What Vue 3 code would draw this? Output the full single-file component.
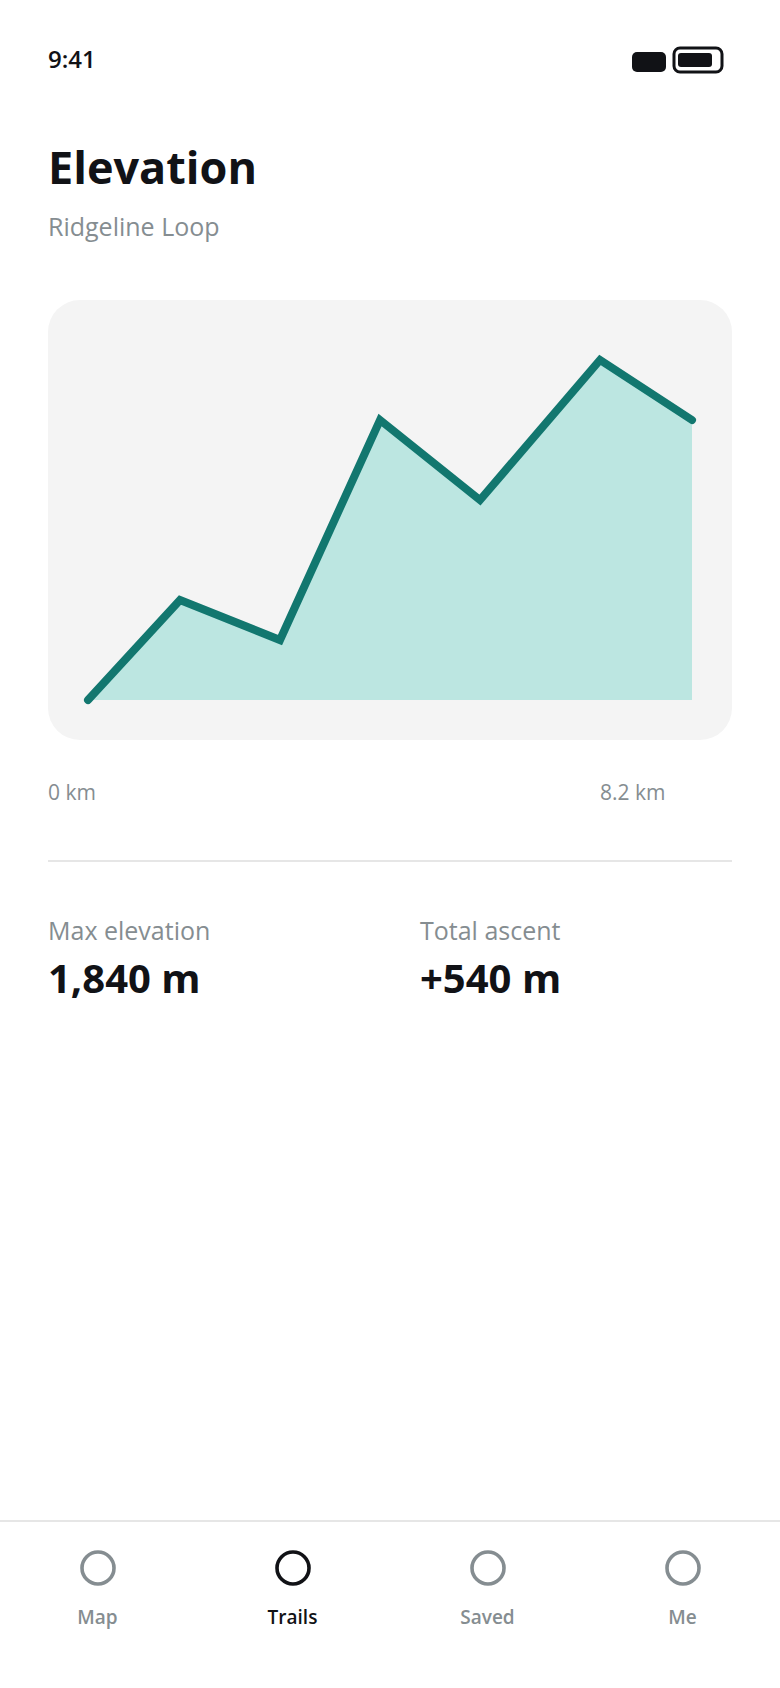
<script setup>
import { computed, ref } from 'vue'

const points = [
  [40, 400],
  [132, 300],
  [232, 340],
  [332, 120],
  [432, 200],
  [552, 60],
  [644, 120],
]
const line = computed(() => points.map((p) => p.join(',')).join(' '))
const area = computed(() => `${line.value} 644,400 40,400`)

const stats = [
  { label: 'Max elevation', value: '1,840 m' },
  { label: 'Total ascent', value: '+540 m' },
]

const tabs = ['Map', 'Trails', 'Saved', 'Me']
const active = ref('Trails')
</script>

<template>
  <div class="screen">
    <header class="status">
      <span class="time">9:41</span>
      <svg class="indicators" width="92" height="30" viewBox="0 0 92 30" aria-hidden="true">
        <rect x="0" y="8" width="34" height="20" rx="5" fill="currentColor" />
        <rect x="42" y="4" width="48" height="24" rx="6" fill="none" stroke="currentColor" stroke-width="3" />
        <rect x="46" y="9" width="34" height="14" rx="3" fill="currentColor" />
      </svg>
    </header>

    <main class="content">
      <h1 class="title">Elevation</h1>
      <p class="subtitle">Ridgeline Loop</p>

      <section class="card" aria-label="Elevation profile">
        <svg class="chart" viewBox="0 0 684 440" aria-hidden="true">
          <polygon :points="area" fill="#bce6e1" />
          <polyline :points="line" fill="none" stroke="#12776f" stroke-width="8" stroke-linecap="round" />
        </svg>
      </section>
      <div class="axis">
        <span>0 km</span>
        <span class="axis-end">8.2 km</span>
      </div>

      <dl class="stats">
        <div v-for="stat in stats" :key="stat.label">
          <dt>{{ stat.label }}</dt>
          <dd>{{ stat.value }}</dd>
        </div>
      </dl>
    </main>

    <nav class="tabs">
      <button
        v-for="tab in tabs"
        :key="tab"
        type="button"
        class="tab"
        :class="{ active: tab === active }"
        @click="active = tab"
      >
        <svg width="36" height="36" viewBox="0 0 36 36" aria-hidden="true">
          <circle cx="18" cy="18" r="16" fill="none" stroke="currentColor" stroke-width="3.6" />
        </svg>
        <span>{{ tab }}</span>
      </button>
    </nav>
  </div>
</template>

<style>
body {
  margin: 0;
  background: #fff;
}
</style>

<style scoped>
.screen {
  display: flex;
  flex-direction: column;
  min-height: 100vh;
  font-family: "Segoe UI", "Open Sans", "Noto Sans", sans-serif;
  color: #111216;
}

.status {
  display: flex;
  justify-content: space-between;
  align-items: center;
  padding: 43px 56px 0 48px;
}

.time {
  font-size: 24px;
  font-weight: 600;
  line-height: 32px;
}

.content {
  flex: 1;
  padding: 0 48px;
}

.title {
  margin: 62px 0 0;
  font-size: 45px;
  font-weight: 700;
  line-height: 60px;
}

.subtitle {
  margin: 13px 0 0;
  font-size: 25px;
  line-height: 32px;
  color: #858d91;
}

.card {
  margin-top: 58px;
  border-radius: 32px;
  background: #f4f4f4;
}

.chart {
  display: block;
  width: 100%;
  height: auto;
}

.axis {
  display: flex;
  justify-content: space-between;
  margin-top: 36px;
  padding-bottom: 52px;
  border-bottom: 2px solid #e6e6e6;
  font-size: 21px;
  line-height: 32px;
  color: #858d91;
}

.axis-end {
  flex-basis: 132px;
}

.stats {
  display: grid;
  grid-template-columns: 1fr 1fr;
  column-gap: 60px;
  margin: 52px 0 0;
}

.stats dt {
  font-size: 25px;
  line-height: 32px;
  color: #858d91;
}

.stats dd {
  margin: 8px 0 0;
  font-size: 40px;
  font-weight: 700;
  line-height: 48px;
}

.tabs {
  display: grid;
  grid-template-columns: repeat(4, 1fr);
  border-top: 2px solid #e6e6e6;
}

.tab {
  display: flex;
  flex-direction: column;
  align-items: center;
  gap: 18px;
  padding: 28px 0 58px;
  border: 0;
  background: none;
  font: inherit;
  font-size: 19px;
  font-weight: 600;
  line-height: 26px;
  color: #858d91;
  cursor: pointer;
}

.tab.active {
  color: #111216;
}
</style>
